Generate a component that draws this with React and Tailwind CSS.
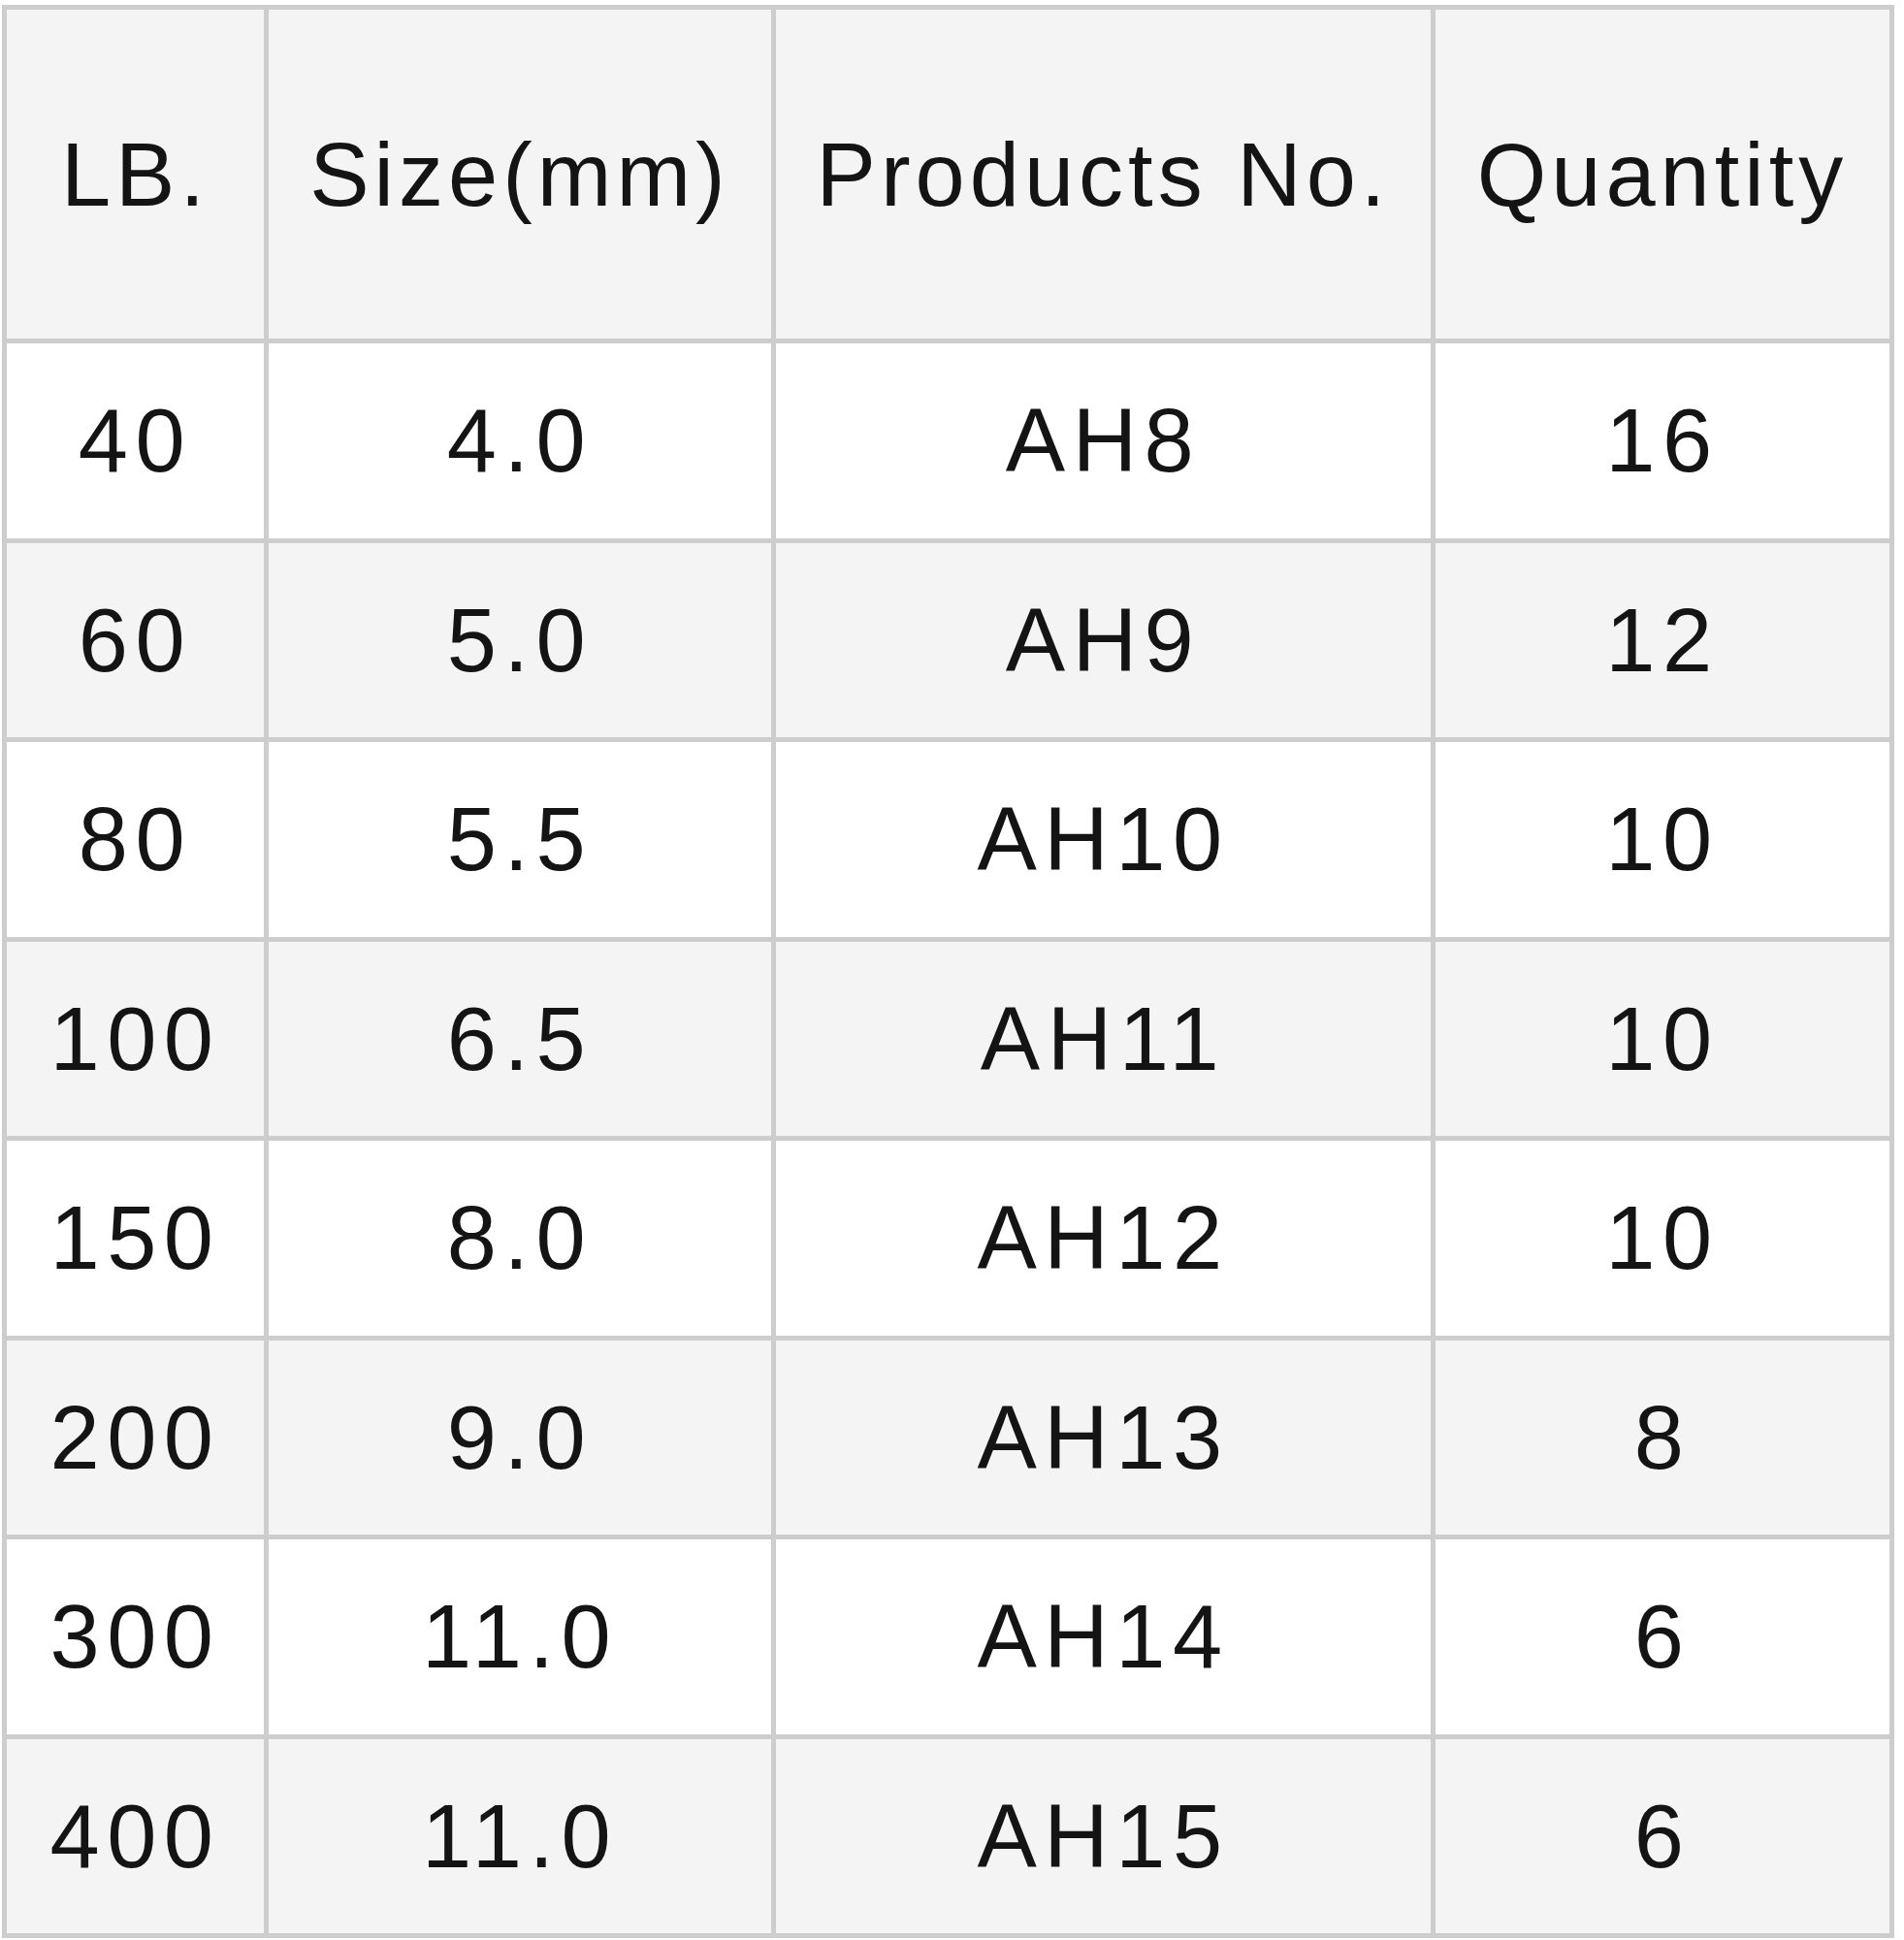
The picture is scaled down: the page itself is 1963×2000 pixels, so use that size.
import React from 'react';

const rows = [
  ['40', '4.0', 'AH8', '16'],
  ['60', '5.0', 'AH9', '12'],
  ['80', '5.5', 'AH10', '10'],
  ['100', '6.5', 'AH11', '10'],
  ['150', '8.0', 'AH12', '10'],
  ['200', '9.0', 'AH13', '8'],
  ['300', '11.0', 'AH14', '6'],
  ['400', '11.0', 'AH15', '6'],
];

const headers = ['LB.', 'Size(mm)', 'Products No.', 'Quantity'];

function Cell({ children, shaded, head }) {
  return (
    <div
      className={`flex items-center justify-center text-[92px] text-[#141414] leading-none ${
        head ? 'tracking-[5px]' : 'tracking-[7.5px]'
      } ${shaded ? 'bg-[#f4f4f4]' : 'bg-white'}`}
    >
      {children}
    </div>
  );
}

export default function App() {
  return (
    <div className="w-[1963px] h-[2000px] bg-white overflow-hidden" style={{ fontFamily: '"Liberation Sans", Arial, sans-serif' }}>
      <div className="ml-[2px] mt-[5px] inline-grid grid-cols-[265px_518px_675px_468px] grid-rows-[339px_repeat(8,200.5px)] gap-[5px] p-[5px] bg-[#cdcdcd]">
        {headers.map((h) => (
          <Cell key={h} shaded head>
            {h}
          </Cell>
        ))}
        {rows.map((r, i) =>
          r.map((v, j) => (
            <Cell key={`${i}-${j}`} shaded={i % 2 === 1}>
              {v}
            </Cell>
          ))
        )}
      </div>
    </div>
  );
}
